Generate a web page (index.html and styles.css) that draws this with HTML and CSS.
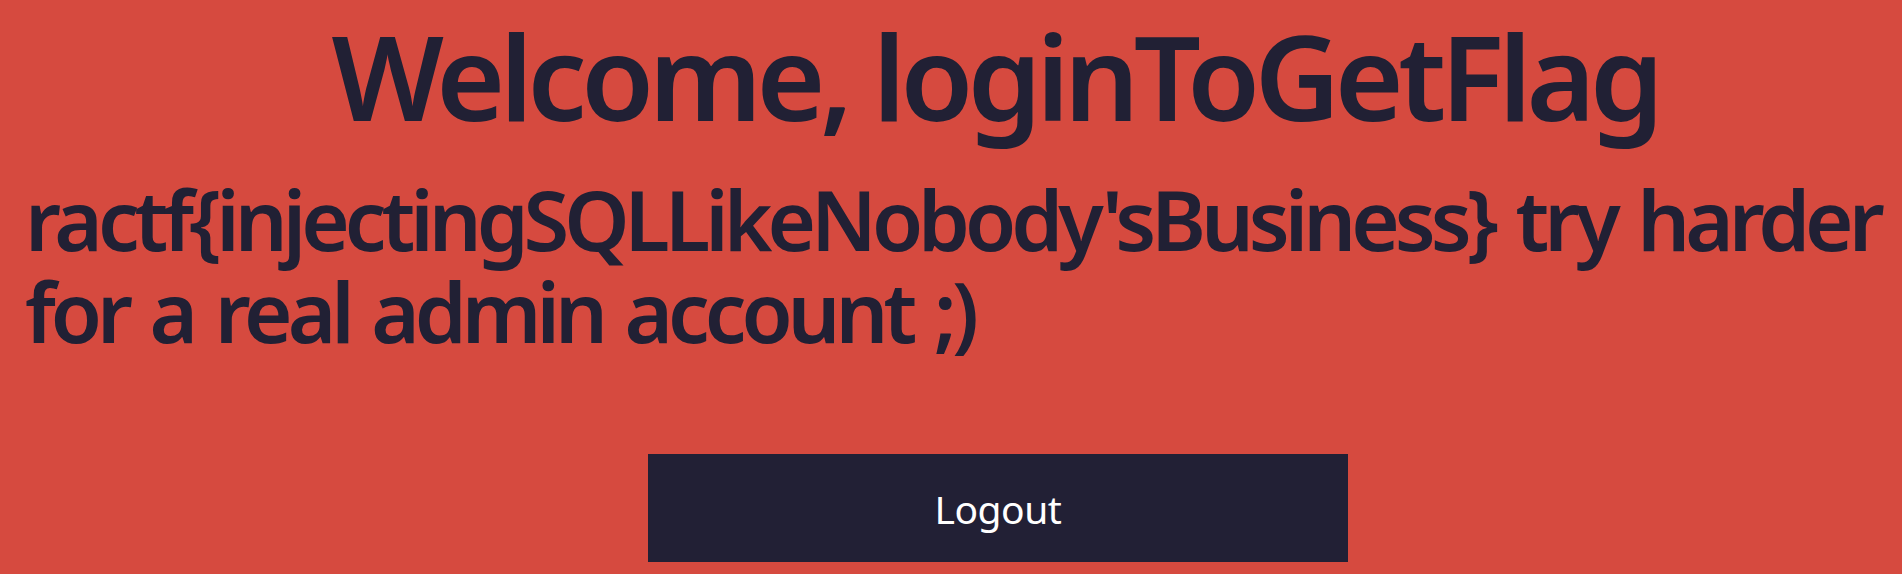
FILE: index.html
```html
<!DOCTYPE html>
<html>
<head>
<meta charset="utf-8">
<title>Welcome</title>
<link rel="stylesheet" href="styles.css">
</head>
<body>
<main class="page">
  <h1 class="welcome">Welcome, loginToGetFlag</h1>
  <h2 class="flag">ractf{injectingSQLLikeNobody'sBusiness} try harder for a real admin account ;)</h2>
  <form class="logout-form">
    <button type="button" class="logout">Logout</button>
  </form>
</main>
</body>
</html>
```
FILE: styles.css
```css
html, body {
  margin: 0;
  padding: 0;
  overflow: hidden;
  background: #d64a3f;
}
body {
  font-family: "Noto Sans", "Open Sans", sans-serif;
  color: #212034;
}
.page {
  margin-left: 25px;
  padding-top: 6px;
  display: flex;
  flex-direction: column;
}
.welcome {
  margin: 0;
  padding-left: 63px;
  text-align: center;
  font-size: 118px;
  font-weight: 600;
  line-height: 139px;
  letter-spacing: -5.5px;
  white-space: nowrap;
}
.flag {
  margin: 28px 0 0;
  font-size: 83px;
  font-weight: 600;
  line-height: 92px;
  letter-spacing: -5px;
  word-spacing: 5px;
}
.logout-form {
  margin: 97px 0 0;
  padding-left: 69px;
  display: flex;
  justify-content: center;
}
.logout {
  width: 700px;
  height: 108px;
  border: 0;
  background: #222035;
  color: #ffffff;
  font-family: "Noto Sans", "Open Sans", sans-serif;
  font-size: 39px;
  font-weight: 400;
  letter-spacing: -0.5px;
  padding: 0;
}
```
